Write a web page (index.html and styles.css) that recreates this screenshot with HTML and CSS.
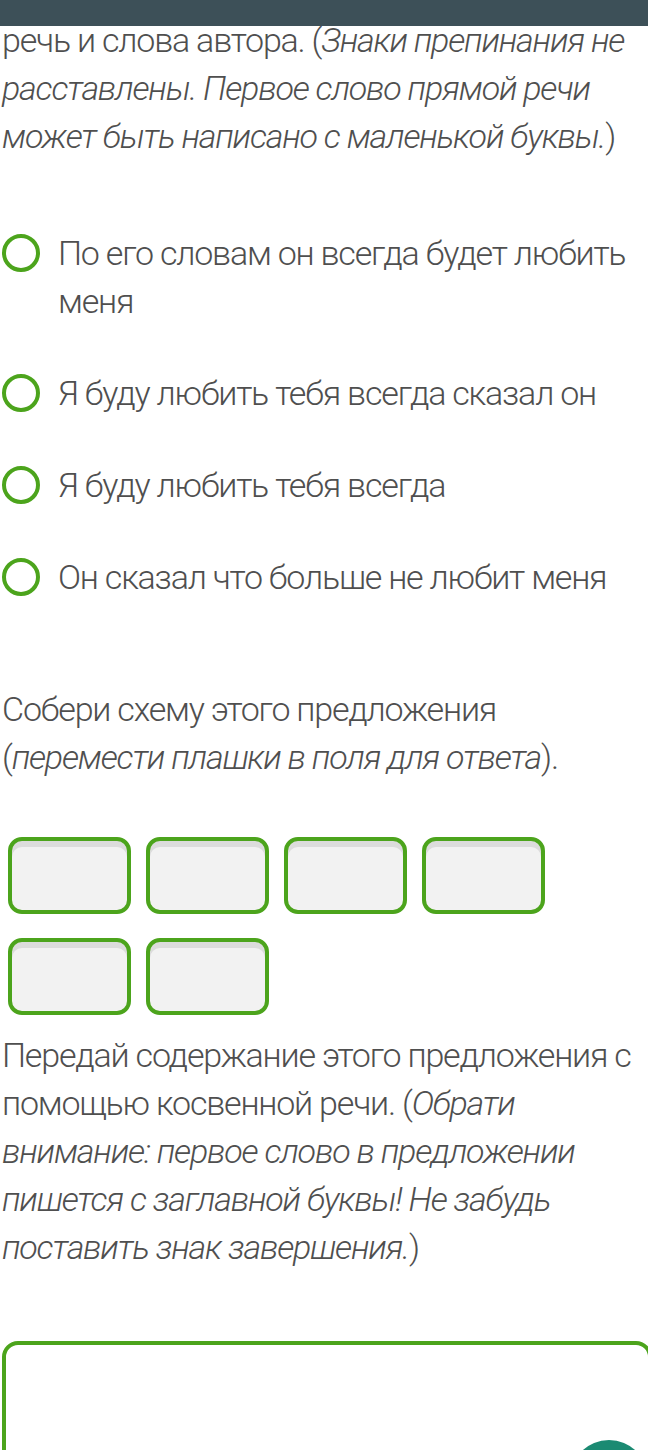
FILE: index.html
```html
<!DOCTYPE html>
<html lang="ru">
<head>
<meta charset="utf-8">
<title>Задание</title>
<link rel="stylesheet" href="styles.css">
</head>
<body>
<header class="topbar"></header>

<main class="page">
  <p class="text intro">речь и слова автора. (<em>Знаки препинания не расставлены. Первое слово прямой речи может быть написано с маленькой буквы.</em>)</p>

  <ul class="options">
    <li class="option"><span class="radio"></span><span class="label">По его словам он всегда будет любить меня</span></li>
    <li class="option"><span class="radio"></span><span class="label">Я буду любить тебя всегда сказал он</span></li>
    <li class="option"><span class="radio"></span><span class="label">Я буду любить тебя всегда</span></li>
    <li class="option"><span class="radio"></span><span class="label">Он сказал что больше не любит меня</span></li>
  </ul>

  <p class="text task">Собери схему этого предложения (<em>перемести плашки в поля для ответа</em>).</p>

  <div class="slots">
    <div class="slot"></div>
    <div class="slot"></div>
    <div class="slot"></div>
    <div class="slot"></div>
    <div class="slot"></div>
    <div class="slot"></div>
  </div>

  <p class="text task2">Передай содержание этого предложения с помощью косвенной речи. (<em>Обрати внимание: первое слово в предложении пишется с заглавной буквы! Не забудь поставить знак завершения.</em>)</p>

  <div class="answer"></div>
</main>

<button class="fab" type="button" aria-label="Помощь"></button>
</body>
</html>
```

FILE: styles.css
```css
html, body {
  margin: 0;
  padding: 0;
  background: #ffffff;
  overflow: hidden;
}

body {
  width: 648px;
  height: 1450px;
  position: relative;
  font-family: Roboto, sans-serif;
  font-weight: 300;
  color: #4f4f4f;
}

.topbar {
  position: absolute;
  top: 0;
  left: 0;
  right: 0;
  height: 26px;
  background: #3d5058;
  z-index: 2;
}

.page {
  padding: 16px 0 0 2px;
}

.text {
  margin: 0;
  font-size: 34px;
  line-height: 48px;
  letter-spacing: -1.2px;
  width: 640px;
}

.text em {
  font-style: italic;
}

.options {
  list-style: none;
  margin: 69px 0 0 0;
  padding: 0;
  display: flex;
  flex-direction: column;
  gap: 44px;
}

.option {
  display: flex;
  align-items: flex-start;
  gap: 18px;
  font-size: 34px;
  line-height: 48px;
  letter-spacing: -1.2px;
}

.radio {
  flex: none;
  width: 30px;
  height: 30px;
  border: 4px solid #4ca41c;
  border-radius: 50%;
  margin-top: 5px;
}

.label {
  width: 584px;
}

.task {
  margin-top: 84px;
}

.slots {
  margin: 56px 0 0 6px;
  display: flex;
  flex-wrap: wrap;
  width: 560px;
  column-gap: 15px;
  row-gap: 24px;
}

.slot {
  box-sizing: border-box;
  width: 123px;
  height: 77px;
  border: 4px solid #4ca41c;
  border-radius: 14px;
  background: #f2f2f2;
  box-shadow: inset 0 6px 0 #dcdcdc;
}

.task2 {
  margin-top: 16px;
}

.answer {
  box-sizing: border-box;
  margin-top: 70px;
  width: 650px;
  height: 140px;
  border: 4px solid #4ca41c;
  border-radius: 16px;
  background: #ffffff;
}

.fab {
  position: absolute;
  left: 570px;
  top: 1440px;
  width: 78px;
  height: 78px;
  border: none;
  border-radius: 50%;
  background: #1b8a72;
  padding: 0;
}
```
